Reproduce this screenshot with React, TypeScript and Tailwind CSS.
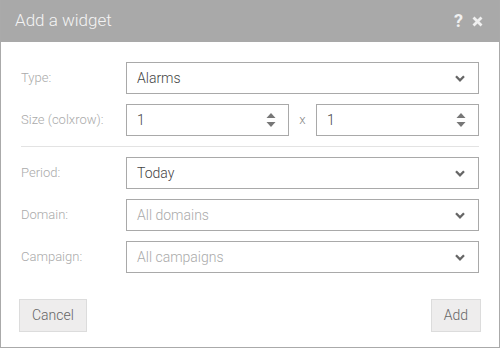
import React from "react";

function Chevron() {
  return (
    <svg width="10" height="7" viewBox="0 0 10 7" className="shrink-0">
      <path d="M1 1.3 L5 5.3 L9 1.3" fill="none" stroke="#666" strokeWidth="2.3" />
    </svg>
  );
}

function Spinner() {
  return (
    <svg width="10" height="18" viewBox="0 0 10 18" className="shrink-0">
      <path d="M0.5 7 L5 2 L9.5 7 Z" fill="#777" />
      <path d="M0.5 11 L5 16 L9.5 11 Z" fill="#777" />
    </svg>
  );
}

function SelectBox({ value, muted }: { value: string; muted?: boolean }) {
  return (
    <div className="flex-1 h-[32px] border border-[#a9a9a9] flex items-center justify-between pl-[10px] pr-[13px]">
      <span className={`text-[14px] font-light ${muted ? "text-[#aaa]" : "text-[#444]"}`}>{value}</span>
      <Chevron />
    </div>
  );
}

function NumberBox({ value }: { value: string }) {
  return (
    <div className="flex-1 h-[32px] border border-[#a9a9a9] flex items-center justify-between pl-[10px] pr-[12px]">
      <span className="text-[14px] font-light text-[#444]">{value}</span>
      <Spinner />
    </div>
  );
}

function Row({ label, children }: { label: string; children: React.ReactNode }) {
  return (
    <div className="flex items-center">
      <label className="w-[105px] shrink-0 text-[13px] font-light text-[#aaa]">{label}</label>
      {children}
    </div>
  );
}

export default function App() {
  return (
    <div className="w-[500px] h-[348px] bg-white border-x border-b border-[#aaa] flex flex-col" style={{ fontFamily: "Roboto, 'Liberation Sans', sans-serif" }}>
      <div className="h-[42px] shrink-0 bg-[#a9a9a9] flex items-center justify-between pl-[14px] pr-[16px]">
        <h4 className="text-[17px] font-light text-[#f4f4f4]">Add a widget</h4>
        <div className="flex items-center gap-[9px] text-[#f0f0f0]">
          <span className="text-[18px] font-bold leading-none">?</span>
          <svg width="11" height="11" viewBox="0 0 11 11">
            <path d="M1.5 1.5 L9.5 9.5 M9.5 1.5 L1.5 9.5" stroke="#f0f0f0" strokeWidth="2.8" />
          </svg>
        </div>
      </div>
      <div className="flex-1 flex flex-col pt-[20px] px-[20px]">
        <div className="flex flex-col gap-[10px]">
          <Row label="Type:">
            <SelectBox value="Alarms" />
          </Row>
          <Row label="Size (colxrow):">
            <div className="flex-1 flex items-center">
              <NumberBox value="1" />
              <span className="w-[27px] text-center text-[13px] font-light text-[#888]">x</span>
              <NumberBox value="1" />
            </div>
          </Row>
          <div className="h-px bg-[#e3e3e3]" />
          <Row label="Period:">
            <SelectBox value="Today" />
          </Row>
          <Row label="Domain:">
            <SelectBox value="All domains" muted />
          </Row>
          <Row label="Campaign:">
            <SelectBox value="All campaigns" muted />
          </Row>
        </div>
        <div className="flex justify-between mt-[26px] -mx-[2px]">
          <button className="h-[33px] px-[12px] bg-[#eeeded] border border-[#dcdcdc] text-[14px] font-light text-[#666]">Cancel</button>
          <button className="h-[33px] px-[12px] bg-[#eeeded] border border-[#dcdcdc] text-[14px] font-light text-[#666]">Add</button>
        </div>
      </div>
    </div>
  );
}
